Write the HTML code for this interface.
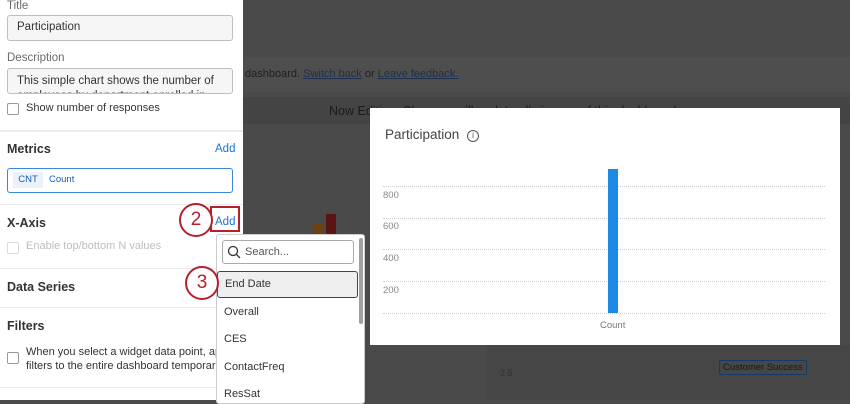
<!DOCTYPE html>
<html><head><style>
*{box-sizing:border-box;margin:0;padding:0}
body{width:850px;height:400px;overflow:hidden;background:#4a4a4a;font-family:"Liberation Sans",sans-serif;position:relative}
.abs{position:absolute}
.side{left:0;top:0;width:243px;height:400px;background:#fff}
.lbl{font-size:11.5px;color:#6a6a6a}
.inp{border:1px solid #bdbdbd;border-radius:3px;background:#f6f6f6;font-size:11.5px;color:#333}
.h{font-size:12.5px;font-weight:bold;color:#333}
.add{font-size:11.5px;color:#1a73d9}
.cb{width:12px;height:12px;border:1px solid #999;border-radius:2px;background:#fff}
.sep{height:1px;background:#ececec;left:0;width:243px}
.grid{left:383px;width:442px;border-top:1px dotted #d0d0d0;height:0}
.yl{left:383px;font-size:9.5px;color:#888}
.item{left:224px;font-size:11px;color:#333}
.circ{width:34px;height:34px;border:2px solid #b5202b;border-radius:50%;background:#fff;color:#b5202b;font-size:19px;text-align:center;line-height:30px}
</style></head><body>
<div class="abs" style="left:243px;top:57px;width:607px;height:35px;background:#4e4e4e"></div>
<div class="abs" style="left:243px;top:97px;width:607px;height:27px;background:#444"></div>
<div class="abs" style="left:245px;top:68px;font-size:11px;color:#1f1f1f">dashboard. <u style="color:#1c2f4e">Switch back</u> or <u style="color:#1c2f4e">Leave feedback.</u></div>
<div class="abs" style="left:329px;top:104px;font-size:12.5px;color:#1a1a1a">Now Editing. Changes will update all viewers of this dashboard.</div>
<div class="abs" style="left:313px;top:224px;width:11px;height:14px;background:#6b4310"></div>
<div class="abs" style="left:326px;top:214px;width:10px;height:24px;background:#5b1414"></div>
<div class="abs" style="left:487px;top:345px;width:363px;height:55px;background:#464646"></div>
<div class="abs" style="left:500px;top:368px;font-size:9px;color:#333">2.5</div>
<div class="abs" style="left:719px;top:360px;border:1px solid #163a66;padding:1px 3px;font-size:9.5px;color:#1a1a1a;border-radius:2px">Customer Success</div>

<div class="abs" style="left:370px;top:108px;width:470px;height:237px;background:#fff"></div>
<div class="abs" style="left:385px;top:127px;font-size:13.5px;color:#444">Participation <span style="display:inline-block;width:12px;height:12px;border:1.3px solid #555;border-radius:50%;font-size:8px;text-align:center;line-height:10px;vertical-align:1px;margin-left:4px">i</span></div>
<div class="abs grid" style="top:186px"></div>
<div class="abs grid" style="top:218px"></div>
<div class="abs grid" style="top:249px"></div>
<div class="abs grid" style="top:281px"></div>
<div class="abs grid" style="top:313px"></div>
<div class="abs yl" style="top:190px">800</div>
<div class="abs yl" style="top:221px">600</div>
<div class="abs yl" style="top:253px">400</div>
<div class="abs yl" style="top:285px">200</div>
<div class="abs" style="left:608px;top:169px;width:10px;height:144px;background:#1e88e5"></div>
<div class="abs" style="left:600px;top:320px;font-size:9.5px;color:#777">Count</div>

<div class="abs side"></div>
<div class="abs lbl" style="left:7px;top:0px">Title</div>
<div class="abs inp" style="left:7px;top:15px;width:226px;height:26px;padding:5px 9px">Participation</div>
<div class="abs lbl" style="left:7px;top:52px">Description</div>
<div class="abs inp" style="left:7px;top:68px;width:226px;height:26px;padding:5px 9px;overflow:hidden;line-height:15px">This simple chart shows the number of employees by department enrolled in this</div>
<div class="abs cb" style="left:7px;top:103px"></div>
<div class="abs" style="left:26px;top:102px;font-size:11px;color:#333">Show number of responses</div>
<div class="abs sep" style="top:130px;height:2px"></div>
<div class="abs h" style="left:7px;top:142px">Metrics</div>
<div class="abs add" style="left:215px;top:143px">Add</div>
<div class="abs" style="left:7px;top:168px;width:226px;height:25px;border:1px solid #3a86e0;border-radius:3px"></div>
<div class="abs" style="left:13px;top:172px;width:30px;height:16px;background:#eaf2fc;font-size:9.5px;color:#1a5fb4;text-align:center;line-height:16px">CNT</div>
<div class="abs" style="left:49px;top:174px;font-size:9.5px;color:#1a5fb4">Count</div>
<div class="abs sep" style="top:204px"></div>
<div class="abs h" style="left:7px;top:216px">X-Axis</div>
<div class="abs" style="left:210px;top:206px;width:30px;height:26px;border:2px solid #b5202b"></div>
<div class="abs add" style="left:215px;top:216px">Add</div>
<div class="abs cb" style="left:7px;top:242px;border-color:#ddd"></div>
<div class="abs" style="left:26px;top:240px;font-size:11px;color:#bdbdbd">Enable top/bottom N values</div>
<div class="abs sep" style="top:268px"></div>
<div class="abs h" style="left:7px;top:280px">Data Series</div>
<div class="abs sep" style="top:307px"></div>
<div class="abs h" style="left:7px;top:319px">Filters</div>
<div class="abs cb" style="left:7px;top:352px"></div>
<div class="abs" style="left:26px;top:345px;font-size:11px;color:#333;line-height:14px">When you select a widget data point, apply it<br>filters to the entire dashboard temporarily</div>
<div class="abs sep" style="top:387px"></div>

<div class="abs" style="left:216px;top:234px;width:149px;height:170px;background:#fff;border:1px solid #ccc;border-radius:3px"></div>
<div class="abs" style="left:359px;top:238px;width:4px;height:86px;background:#a0a0a0;border-radius:2px"></div>
<div class="abs" style="left:222px;top:240px;width:132px;height:24px;border:1px solid #aaa;border-radius:3px"></div>
<svg class="abs" style="left:227px;top:245px" width="14" height="14"><circle cx="6" cy="6" r="4.5" fill="none" stroke="#333" stroke-width="1.3"/><line x1="9.3" y1="9.3" x2="13" y2="13" stroke="#333" stroke-width="1.3"/></svg>
<div class="abs" style="left:245px;top:246px;font-size:11px;color:#555">Search...</div>
<div class="abs" style="left:217px;top:271px;width:141px;height:27px;background:#efefef;border:1.5px solid #1c4a8e;border-radius:3px"></div>
<div class="abs item" style="left:225px;top:278px">End Date</div>
<div class="abs item" style="top:306px">Overall</div>
<div class="abs item" style="top:333px">CES</div>
<div class="abs item" style="top:361px">ContactFreq</div>
<div class="abs item" style="top:388px">ResSat</div>

<div class="abs circ" style="left:179px;top:203px">2</div>
<div class="abs circ" style="left:185px;top:266px">3</div>
</body></html>
